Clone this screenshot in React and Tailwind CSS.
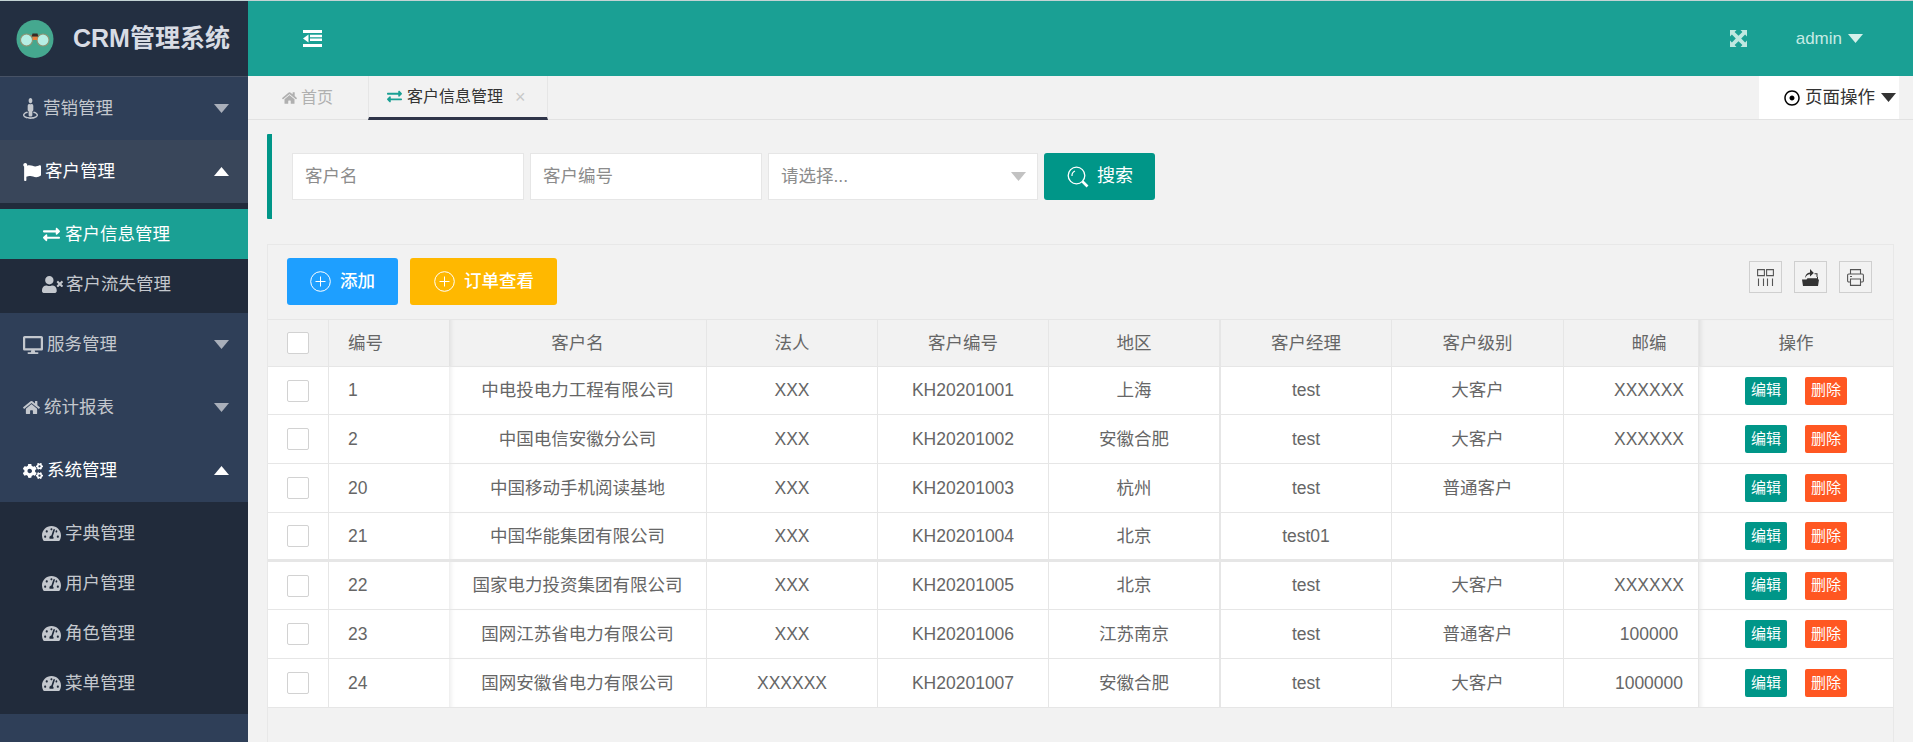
import React from "react";
import {
  FaStreetView, FaFlag, FaExchangeAlt, FaUserTimes, FaDesktop, FaHome, FaCogs,
  FaTachometerAlt, FaRegDotCircle,
} from "react-icons/fa";

const Caret = ({ up, className = "" }) => (
  <svg viewBox="0 0 15 9" className={`w-[15px] h-[9px] fill-current ${className}`}>
    <path d={up ? "M7.5 0 15 9H0Z" : "M0 0h15L7.5 9Z"} />
  </svg>
);

const Logo = () => (
  <svg viewBox="0 0 38 38" className="w-[38px] h-[38px] shrink-0">
    <ellipse cx="19" cy="19" rx="18.5" ry="19" fill="#45a88f" />
    <path d="M5 19Q19 12 33 19" stroke="#a88a5c" strokeWidth="2" fill="none" />
    <circle cx="10.5" cy="20" r="6" fill="#b6eee4" stroke="#8d9474" strokeWidth="1.1" />
    <circle cx="27" cy="20" r="6" fill="#b6eee4" stroke="#8d9474" strokeWidth="1.1" />
    <path d="M16.6 16.5h4.8v3.5h-4.8z" fill="#e8803c" />
    <path d="M16.5 13.5h5l.8 3h-6.6z" fill="#3a2a25" />
  </svg>
);

const IndentIco = () => (
  <svg viewBox="0 0 19 17" className="w-[19px] h-[17px]" fill="#fff">
    <path d="M0 0h19v3H0zM7 4.7h12v2.6H7zM7 8.4h12V11H7zM0 14h19v3H0zM5.5 4.5v8L0 8.5z" />
  </svg>
);

const ExpandIco = () => (
  <svg viewBox="0 0 17 17" className="w-[17px] h-[17px]" fill="#c0e8e1">
    <path d="M0 0h6.5L4.6 1.9 8.5 5.8l3.9-3.9L10.5 0H17v6.5l-1.9-1.9-3.9 3.9 3.9 3.9 1.9-1.9V17h-6.5l1.9-1.9-3.9-3.9-3.9 3.9L6.5 17H0v-6.5l1.9 1.9 3.9-3.9-3.9-3.9L0 6.5z" />
  </svg>
);

const PlusCircle = ({ className = "" }) => (
  <svg viewBox="0 0 21 21" className={`w-[21px] h-[21px] shrink-0 ${className}`} fill="none" stroke="currentColor" strokeWidth="1">
    <circle cx="10.5" cy="10.5" r="9.8" />
    <path d="M10.5 5.5v10M5.5 10.5h10" />
  </svg>
);

const SearchIco = () => (
  <svg viewBox="0 0 22 22" className="w-[22px] h-[22px] shrink-0" fill="none" stroke="currentColor">
    <circle cx="9.5" cy="9.5" r="8.3" strokeWidth="1.3" />
    <path d="M5 10a5 5 0 0 1 3-5" strokeWidth="1.2" />
    <path d="M15.5 15.5l5 5" strokeWidth="2.6" />
  </svg>
);

const ColsIco = () => (
  <svg viewBox="0 0 17 17" className="w-[17px] h-[17px]" fill="none" stroke="#555" strokeWidth="1.1">
    <path d="M.6.6h6.8v6H.6zM9.6.6h6.8v6H9.6zM1.5 9.5V17M6.5 9.5V17M10.5 9.5V17M15.5 9.5V17" />
  </svg>
);
const ExportIco = () => (
  <svg viewBox="0 0 17 17" className="w-[17px] h-[17px]" fill="#333">
    <path d="M1 17L0 10.5h4.5l1-1.2H15V8H16v2.5h1L16 17z" />
    <path d="M3 9.2c.2-3.5 2-5.6 5-5.8V0l3.8 3.9L8 7.5V5.2C5.8 5.3 4.3 6.7 3 9.2z" />
    <path d="M12.5 4.2h3V8h-1V5.2h-2z" />
  </svg>
);
const PrintIco = () => (
  <svg viewBox="0 0 17 17" className="w-[17px] h-[17px]" fill="none" stroke="#555" strokeWidth="1.1">
    <path d="M3.5 5V.6h10V5M3.5 13H1.8A1.2 1.2 0 0 1 .6 11.8V6.2A1.2 1.2 0 0 1 1.8 5h13.4a1.2 1.2 0 0 1 1.2 1.2v5.6a1.2 1.2 0 0 1-1.2 1.2h-1.7M3.5 10h10v6.4h-10zM3 7.5h2" />
  </svg>
);

const Top = ({ icon: Icon, iconCls, iconProps, label, open, active, gap }) => (
  <div className={`h-[63px] flex items-center pl-[23px] pr-[19px] ${active ? "bg-[#39465a] text-white" : open ? "text-white" : "text-[#c4c8ce]"}`}>
    <Icon className={`${iconCls} shrink-0`} {...iconProps} />
    <span className={`text-[17.5px] ${gap} flex-1`}>{label}</span>
    <Caret up={open} className={open ? "text-white" : "text-[#a9afba]"} />
  </div>
);

const Sub = ({ icon: Icon, iconCls = "w-[18px] h-[18px]", label, active, gap = "ml-[4px]" }) => (
  <div className={`h-[50px] flex items-center pl-[42px] ${active ? "bg-[#1aa094] text-white" : "text-[#c4c8ce]"}`}>
    <Icon className={`${iconCls} shrink-0`} />
    <span className={`text-[17.5px] ${gap}`}>{label}</span>
  </div>
);

const rows = [
  ["1", "中电投电力工程有限公司", "XXX", "KH20201001", "上海", "test", "大客户", "XXXXXX", "h-[48px]"],
  ["2", "中国电信安徽分公司", "XXX", "KH20201002", "安徽合肥", "test", "大客户", "XXXXXX", "h-[49px]"],
  ["20", "中国移动手机阅读基地", "XXX", "KH20201003", "杭州", "test", "普通客户", "", "h-[49px]"],
  ["21", "中国华能集团有限公司", "XXX", "KH20201004", "北京", "test01", "", "", "h-[49px]"],
  ["22", "国家电力投资集团有限公司", "XXX", "KH20201005", "北京", "test", "大客户", "XXXXXX", "h-[48px]"],
  ["23", "国网江苏省电力有限公司", "XXX", "KH20201006", "江苏南京", "test", "普通客户", "100000", "h-[49px]"],
  ["24", "国网安徽省电力有限公司", "XXXXXX", "KH20201007", "安徽合肥", "test", "大客户", "1000000", "h-[49px]"],
];

const Check = () => <div className="w-[22px] h-[22px] bg-white border border-[#d2d2d2] rounded-[2px] mx-auto" />;

const fixedShadow = "shadow-[inset_5px_0_4px_-3px_rgba(0,0,0,0.08)]";

export default function App() {
  return (
    <div className="w-[1913px] h-[742px] overflow-hidden flex border-t border-[#c3d3d4] bg-[#f2f2f2] text-[#666] font-['Liberation_Sans','Noto_Sans_CJK_SC',sans-serif]">
      <aside className="w-[248px] shrink-0 bg-[#2f3f58] flex flex-col">
        <div className="h-[76px] shrink-0 bg-[#232f41] border-b border-[#475265] flex items-center pl-[16px]">
          <Logo />
          <span className="ml-[19px] text-[25px] font-bold text-[#d8dce4] whitespace-nowrap">CRM管理系统</span>
        </div>
        <Top icon={FaStreetView} iconCls="w-[15px] h-[21px]" iconProps={{ preserveAspectRatio: "none" }} label="营销管理" gap="ml-[5px]" />
        <Top icon={FaFlag} iconCls="w-[18px] h-[18px]" label="客户管理" open active gap="ml-[4px]" />
        <div className="bg-[#212b3b] pt-[6px] pb-[4px]">
          <Sub icon={FaExchangeAlt} label="客户信息管理" active iconCls="w-[19px] h-[17px]" gap="ml-[4px]" />
          <Sub icon={FaUserTimes} label="客户流失管理" iconCls="w-[21px] h-[17px]" gap="ml-[3px]" />
        </div>
        <Top icon={FaDesktop} iconCls="w-[20px] h-[18px]" label="服务管理" gap="ml-[4px]" />
        <Top icon={FaHome} iconCls="w-[17px] h-[15px]" label="统计报表" gap="ml-[4px]" />
        <Top icon={FaCogs} iconCls="w-[20px] h-[18px]" label="系统管理" open gap="ml-[4px]" />
        <div className="bg-[#212b3b] py-[6px]">
          {["字典管理", "用户管理", "角色管理", "菜单管理"].map((t) => (
            <Sub key={t} icon={FaTachometerAlt} label={t} iconCls="w-[19px] h-[17px]" gap="ml-[4px]" />
          ))}
        </div>
      </aside>

      <main className="flex-1 min-w-0 flex flex-col">
        <header className="h-[75px] shrink-0 bg-[#1aa094] flex items-center pl-[55px] text-[#c6ebe4]">
          <IndentIco />
          <div className="ml-auto flex items-center pr-[50px]">
            <ExpandIco />
            <span className="ml-[49px] text-[17px]">admin</span>
            <Caret className="ml-[6px] text-[#d4f0ea]" />
          </div>
        </header>

        <div className="h-[44px] shrink-0 border-b border-[#e2e2e2] flex items-stretch">
          <div className="w-[120px] flex items-center pl-[34px] text-[#b0b0b0]">
            <FaHome className="w-[15px] h-[14px]" />
            <span className="ml-[4px] text-[16px]">首页</span>
          </div>
          <div className="w-[180px] h-[44px] border-x border-[#e6e6e6] border-b-[3px] border-b-[#2f3549] flex items-center pl-[17px] text-[#333]">
            <FaExchangeAlt className="w-[17px] h-[15px] text-[#1aa094]" />
            <span className="ml-[4px] text-[16px]">客户信息管理</span>
            <span className="ml-[12px] text-[18px] leading-none text-[#c8c8c8]">×</span>
          </div>
          <div className="ml-auto mr-[14px] w-[140px] h-[43px] bg-white flex items-center pl-[25px] text-[#333]">
            <FaRegDotCircle className="w-[16px] h-[16px] text-black" />
            <span className="ml-[5px] text-[17.5px]">页面操作</span>
            <Caret className="ml-[6px] text-[#333]" />
          </div>
        </div>

        <section className="h-[124px] shrink-0 pl-[19px] pt-[14px]">
          <div className="h-[85px] border-l-[5px] border-[#009688] rounded-[1px] pl-[20px] pt-[19px] flex items-start gap-[6px]">
            <div className="w-[232px] h-[47px] bg-white border border-[#e6e6e6] flex items-center pl-[12px] text-[17.5px] text-[#8c8c8c]">客户名</div>
            <div className="w-[232px] h-[47px] bg-white border border-[#e6e6e6] flex items-center pl-[12px] text-[17.5px] text-[#8c8c8c]">客户编号</div>
            <div className="w-[270px] h-[47px] bg-white border border-[#e6e6e6] flex items-center pl-[12px] pr-[11px] text-[17.5px] text-[#8c8c8c] justify-between">
              <span>请选择...</span>
              <Caret className="text-[#c2c2c2]" />
            </div>
            <button className="w-[111px] h-[47px] bg-[#009688] rounded-[3px] text-white flex items-center pl-[23px] text-[18px]">
              <SearchIco />
              <span className="ml-[8px]">搜索</span>
            </button>
          </div>
        </section>

        <section className="mx-[19px] flex-1 border border-b-0 border-[#e8e8e8]">
          <div className="h-[74px] flex pl-[19px] pr-[21px] pt-[13px]">
            <button className="w-[111px] h-[47px] bg-[#1e9fff] rounded-[3px] text-white flex items-center pl-[23px]">
              <PlusCircle />
              <span className="ml-[9px] text-[17.5px] font-medium">添加</span>
            </button>
            <button className="ml-[12px] w-[147px] h-[47px] bg-[#ffb800] rounded-[3px] text-white flex items-center pl-[24px]">
              <PlusCircle />
              <span className="ml-[9px] text-[17.5px] font-medium">订单查看</span>
            </button>
            <div className="ml-auto flex gap-[12px] pt-[3px] items-start">
              {[ColsIco, ExportIco, PrintIco].map((I, i) => (
                <div key={i} className="w-[33px] h-[32px] border border-[#cfcfcf] flex items-center justify-center"><I /></div>
              ))}
            </div>
          </div>
          <table className="table-fixed w-[1625px] border-separate border-spacing-0 text-[17.5px]">
            <colgroup>
              <col className="w-[60px]" />
              <col className="w-[121px]" />
              <col className="w-[257px]" />
              <col className="w-[171px]" />
              <col className="w-[171px]" />
              <col className="w-[171px]" />
              <col className="w-[172px]" />
              <col className="w-[172px]" />
              <col className="w-[135px]" />
              <col className="w-[195px]" />
            </colgroup>
            <thead>
              <tr className="h-[48px] bg-[#f2f2f2] font-normal">
                <th className="border-y border-[#e6e6e6] font-normal"><Check /></th>
                <th className="border-y border-l border-[#e6e6e6] font-normal text-left pl-[19px]">编号</th>
                <th className={`border-y border-[#e6e6e6] font-normal ${fixedShadow}`}>客户名</th>
                <th className="border-y border-l border-[#e6e6e6] font-normal">法人</th>
                <th className="border-y border-l border-[#e6e6e6] font-normal">客户编号</th>
                <th className="border-y border-l border-[#e6e6e6] font-normal">地区</th>
                <th className="border-y border-l-2 border-[#e6e6e6] font-normal">客户经理</th>
                <th className="border-y border-l border-[#e6e6e6] font-normal">客户级别</th>
                <th className="border-y border-l border-[#e6e6e6] font-normal pl-[36px]">邮编</th>
                <th className={`border-y border-l border-[#e6e6e6] font-normal ${fixedShadow}`}>操作</th>
              </tr>
            </thead>
            <tbody>
              {rows.map((r, i) => {
                const b = i === 3 ? "border-b-[3px]" : "border-b";
                const td = `${b} border-[#e6e6e6] text-center`;
                return (
                  <tr key={r[0]} className={`${r[8]} bg-white`}>
                    <td className={td}><Check /></td>
                    <td className={`${b} border-l border-[#e6e6e6] text-left pl-[19px]`}>{r[0]}</td>
                    <td className={`${td} ${fixedShadow}`}>{r[1]}</td>
                    <td className={`${td} border-l`}>{r[2]}</td>
                    <td className={`${td} border-l`}>{r[3]}</td>
                    <td className={`${td} border-l`}>{r[4]}</td>
                    <td className={`${td} border-l-2`}>{r[5]}</td>
                    <td className={`${td} border-l`}>{r[6]}</td>
                    <td className={`${td} border-l pl-[36px] whitespace-nowrap`}>{r[7]}</td>
                    <td className={`${td} border-l ${fixedShadow}`}>
                      <div className="flex justify-center gap-[18px]">
                        <span className="w-[42px] h-[28px] bg-[#009688] rounded-[2px] text-white text-[15px] flex items-center justify-center">编辑</span>
                        <span className="w-[42px] h-[28px] bg-[#ff5722] rounded-[2px] text-white text-[15px] flex items-center justify-center">删除</span>
                      </div>
                    </td>
                  </tr>
                );
              })}
            </tbody>
          </table>
        </section>
      </main>
    </div>
  );
}
